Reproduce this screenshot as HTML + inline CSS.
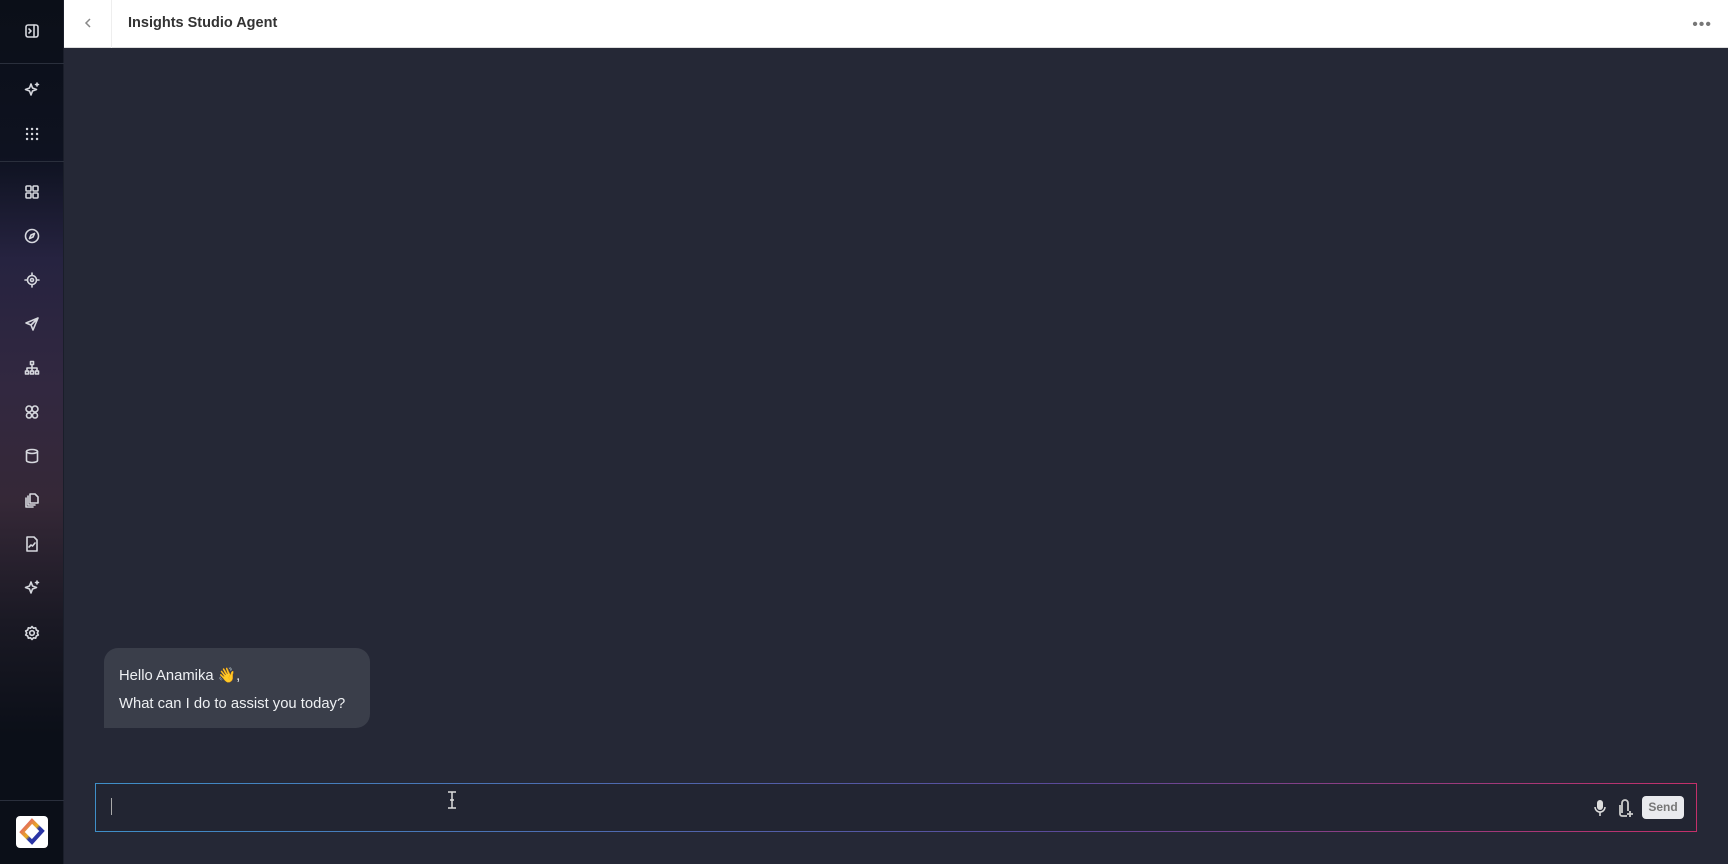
<!DOCTYPE html>
<html><head><style>
*{box-sizing:border-box;margin:0;padding:0}
body{width:1728px;height:864px;overflow:hidden;background:#252836;font-family:"Liberation Sans",sans-serif;position:relative}
.side{position:absolute;left:0;top:0;width:64px;height:864px;background:linear-gradient(180deg,#0b0f18 0%,#0e1220 18%,#262340 30%,#322840 45%,#352837 58%,#1a1924 72%,#0b0f18 85%,#0b0f18 100%);border-right:1px solid #1a1e2a}
.sep{position:absolute;left:0;width:64px;height:1px;background:#2a2f3c}
.ic{position:absolute;left:22px;width:20px;height:20px}
.ic svg{width:20px;height:20px;fill:none;stroke:#d6d8de;stroke-width:1.6;stroke-linecap:round;stroke-linejoin:round}
.hdr{position:absolute;left:64px;top:0;right:0;height:48px;background:#fff;border-bottom:1px solid #ddd}
.hdr .back{position:absolute;left:0;top:0;width:48px;height:48px;border-right:1px solid #eee}
.title{position:absolute;left:64px;top:15px;font-size:14.5px;font-weight:bold;color:#333}
.bubble{position:absolute;left:104px;top:648px;width:266px;height:80px;background:#3a3e4a;border-radius:14px 14px 14px 0;color:#eef0f3;font-size:14.8px;padding:14px 15px;line-height:28px;white-space:nowrap}
.input{position:absolute;left:95px;top:783px;width:1602px;height:49px;border-radius:4px;border:1.5px solid;border-image:linear-gradient(90deg,#3f8fc8,#5a4a9a 60%,#c4306a) 1;background:#222532}
.send{position:absolute;left:1642px;top:796px;width:42px;height:23px;background:#e9eaee;border-radius:4px;color:#777;font-size:12px;font-weight:bold;text-align:center;line-height:23px}
</style></head><body>
<div class="side">
<div class="sep" style="top:63px"></div>
<div class="sep" style="top:161px"></div>
<div class="ic" style="top:21px"><svg viewBox="0 0 20 20"><rect x="4" y="4" width="12" height="12" rx="2"/><path d="M12 4v12M7 8l2 2-2 2"/></svg></div>
<div class="ic" style="top:80px"><svg viewBox="0 0 20 20"><path d="M9 4l1.5 4 4 1.5-4 1.5L9 15l-1.5-4-4-1.5 4-1.5z"/><path d="M15 3v3M13.5 4.5h3"/></svg></div>
<div class="ic" style="top:124px"><svg viewBox="0 0 20 20" style="stroke-width:2.4"><path d="M5 5h.1M10 5h.1M15 5h.1M5 10h.1M10 10h.1M15 10h.1M5 15h.1M10 15h.1M15 15h.1"/></svg></div>
<div class="ic" style="top:182px"><svg viewBox="0 0 20 20"><rect x="4" y="4" width="5" height="5" rx="1"/><rect x="11" y="4" width="5" height="5" rx="1"/><rect x="4" y="11" width="5" height="5" rx="1"/><rect x="11" y="11" width="5" height="5" rx="1"/></svg></div>
<div class="ic" style="top:226px"><svg viewBox="0 0 20 20"><circle cx="10" cy="10" r="6.5"/><path d="M12.5 7.5l-1.5 3.5-3.5 1.5 1.5-3.5z"/></svg></div>
<div class="ic" style="top:270px"><svg viewBox="0 0 20 20"><circle cx="10" cy="10" r="4.5"/><circle cx="10" cy="10" r="1.5"/><path d="M10 3v2M10 15v2M3 10h2M15 10h2"/></svg></div>
<div class="ic" style="top:314px"><svg viewBox="0 0 20 20"><path d="M16 4L4 9l5 2 2 5z M9 11l7-7"/></svg></div>
<div class="ic" style="top:358px"><svg viewBox="0 0 20 20"><rect x="8.5" y="3.5" width="3" height="3"/><path d="M10 7v3M5 10h10M5 10v3M10 10v3M15 10v3"/><rect x="3.5" y="13" width="3" height="3"/><rect x="8.5" y="13" width="3" height="3"/><rect x="13.5" y="13" width="3" height="3"/></svg></div>
<div class="ic" style="top:402px"><svg viewBox="0 0 20 20"><circle cx="7" cy="7" r="3"/><circle cx="13" cy="7" r="3"/><circle cx="7" cy="13.5" r="2.5"/><circle cx="13" cy="13.5" r="2.5"/></svg></div>
<div class="ic" style="top:446px"><svg viewBox="0 0 20 20"><ellipse cx="10" cy="5.5" rx="5.5" ry="2"/><path d="M4.5 5.5v9c0 1.1 2.5 2 5.5 2s5.5-.9 5.5-2v-9"/></svg></div>
<div class="ic" style="top:490px"><svg viewBox="0 0 20 20"><path d="M8 4h5l3 3v6H8z"/><path d="M6 6v9h7M4 8v9h7"/></svg></div>
<div class="ic" style="top:534px"><svg viewBox="0 0 20 20"><path d="M5 3h7l3 3v11H5z"/><path d="M7 13l2-2 1.5 1 2.5-3"/></svg></div>
<div class="ic" style="top:578px"><svg viewBox="0 0 20 20"><path d="M9 4l1.5 4 4 1.5-4 1.5L9 15l-1.5-4-4-1.5 4-1.5z"/><path d="M15 3v3M13.5 4.5h3"/></svg></div>
<div class="ic" style="top:623px"><svg viewBox="0 0 20 20"><circle cx="10" cy="10" r="2.3"/><path d="M10 3.5l1.5 1.7 2.2-.4.6 2.2 2 1-1 2 1 2-2 1-.6 2.2-2.2-.4L10 16.5l-1.5-1.7-2.2.4-.6-2.2-2-1 1-2-1-2 2-1 .6-2.2 2.2.4z"/></svg></div>
<div class="sep" style="top:800px"></div>
<div style="position:absolute;left:16px;top:816px;width:32px;height:32px;background:#fff;border-radius:4px">
<svg viewBox="0 0 32 32" width="32" height="32"><path d="M16 5l10 10-10 11L6 16z" fill="none" stroke="url(#g)" stroke-width="4"/><defs><linearGradient id="g" x1="0" y1="0" x2="1" y2="1"><stop offset="0" stop-color="#e04a7a"/><stop offset=".5" stop-color="#e8b020"/><stop offset=".6" stop-color="#2a3aa8"/><stop offset="1" stop-color="#2a2aa0"/></linearGradient></defs></svg></div>
</div>
<div class="hdr"><div class="back"><svg width="48" height="48" viewBox="0 0 48 48"><path d="M26 19l-4 4 4 4" fill="none" stroke="#888" stroke-width="1.5"/></svg></div>
<div class="title">Insights Studio Agent</div>
<div style="position:absolute;right:16px;top:16px;color:#777;font-size:16px;letter-spacing:1px">•••</div></div>
<div class="bubble">Hello Anamika 👋,<br>What can I do to assist you today?</div>
<div class="input"><div style="position:absolute;left:15px;top:14px;width:1px;height:17px;background:#aaa"></div></div>
<svg style="position:absolute;left:445px;top:790px" width="14" height="20" viewBox="0 0 14 20"><path d="M3 2h8M3 18h8M7 2v16M5 10h4" stroke="#ddd" stroke-width="1.5" fill="none"/></svg>
<svg style="position:absolute;left:1592px;top:798px" width="16" height="20" viewBox="0 0 16 20"><rect x="5" y="2" width="6" height="10" rx="3" fill="#ddd"/><path d="M3 9a5 5 0 0010 0M8 14v4" stroke="#ddd" stroke-width="1.5" fill="none"/></svg>
<svg style="position:absolute;left:1616px;top:797px" width="20" height="22" viewBox="0 0 20 22"><path d="M6 16V6a3 3 0 016 0v8" stroke="#ccc" stroke-width="1.8" fill="none"/><path d="M4 8v9a2 2 0 002 2h5M14 14v6M11 17h6" stroke="#ccc" stroke-width="1.8" fill="none"/></svg>
<div class="send">Send</div>
</body></html>
